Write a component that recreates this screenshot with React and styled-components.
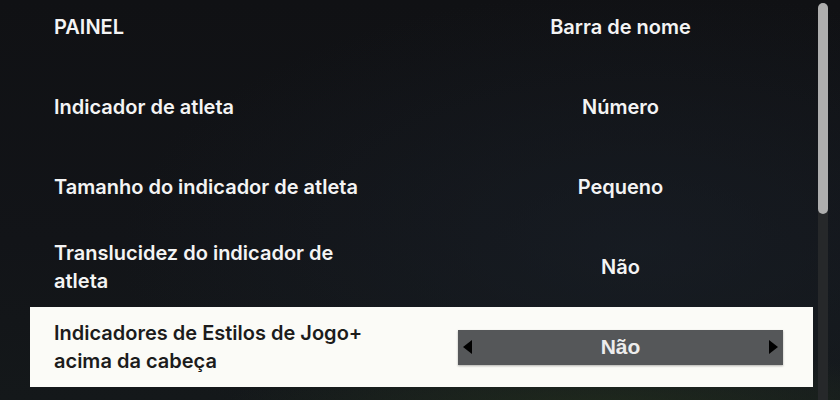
import styled, { createGlobalStyle } from "styled-components";

const GlobalStyle = createGlobalStyle`
  html, body {
    margin: 0;
    padding: 0;
    width: 840px;
    height: 400px;
    overflow: hidden;
  }
  body {
    font-family: Inter, "Open Sans", sans-serif;
  }
`;

const settings = [
  { label: "PAINEL", value: "Barra de nome" },
  { label: "Indicador de atleta", value: "Número" },
  { label: "Tamanho do indicador de atleta", value: "Pequeno" },
  { label: ["Translucidez do indicador de", "atleta"], value: "Não" },
  {
    label: ["Indicadores de Estilos de Jogo+", "acima da cabeça"],
    value: "Não",
    active: true,
  },
];

export default function App() {
  return (
    <>
      <GlobalStyle />
      <Screen>
        <List>
          {settings.map((s, i) => (
            <Row key={i} $active={s.active}>
              <Label $active={s.active}>
                {Array.isArray(s.label)
                  ? s.label.map((l, j) => <span key={j}>{l}</span>)
                  : s.label}
              </Label>
              {s.active ? (
                <Stepper>
                  <Arrow $dir="left" />
                  <StepValue>{s.value}</StepValue>
                  <Arrow $dir="right" />
                </Stepper>
              ) : (
                <Value>{s.value}</Value>
              )}
            </Row>
          ))}
        </List>
        <Scrollbar>
          <Thumb />
        </Scrollbar>
      </Screen>
    </>
  );
}

const Screen = styled.div`
  width: 840px;
  height: 400px;
  display: flex;
  overflow: hidden;
  background:
    radial-gradient(ellipse 380px 60px at 600px 410px, rgba(38, 52, 28, 0.6), transparent),
    radial-gradient(ellipse 520px 260px at 640px 250px, rgba(26, 33, 42, 0.55), transparent),
    linear-gradient(180deg, #101114 0%, #121418 60%, #14181a 100%);
`;

const List = styled.div`
  flex: 1;
  display: flex;
  flex-direction: column;
  margin-top: -13px;
  padding-left: 30px;
  padding-right: 5px;
`;

const Row = styled.div`
  height: 80px;
  flex-shrink: 0;
  display: flex;
  align-items: center;
  padding: 0 30px 0 24px;
  background: ${(p) => (p.$active ? "#fbfbf7" : "transparent")};
`;

const Label = styled.div`
  flex: 1;
  display: flex;
  flex-direction: column;
  color: ${(p) => (p.$active ? "#1c1c1c" : "#f4f4f4")};
  font-size: 20px;
  font-weight: 600;
  line-height: 28px;
`;

const Value = styled.div`
  width: 325px;
  text-align: center;
  color: #f4f4f4;
  font-size: 20px;
  font-weight: 600;
`;

const Stepper = styled.div`
  width: 325px;
  height: 35px;
  display: flex;
  align-items: center;
  justify-content: space-between;
  padding: 0 5px 0 5px;
  box-sizing: border-box;
  background: #555759;
  box-shadow: 0 1px 2px rgba(0, 0, 0, 0.3);
`;

const StepValue = styled.span`
  color: #ececec;
  font-family: "Liberation Sans", Arial, sans-serif;
  font-weight: 700;
  font-size: 21px;
`;

const Arrow = styled.span`
  width: 0;
  height: 0;
  border-top: 7px solid transparent;
  border-bottom: 7px solid transparent;
  ${(p) =>
    p.$dir === "left"
      ? "border-right: 9px solid #000;"
      : "border-left: 9px solid #000;"}
`;

const Scrollbar = styled.div`
  width: 10px;
  margin: 3px 12px 0 0;
  background: #26282a;
  border-radius: 5px 5px 0 0;
  display: flex;
  flex-direction: column;
`;

const Thumb = styled.div`
  height: 211px;
  background: #aeaeae;
  border-radius: 5px;
`;
